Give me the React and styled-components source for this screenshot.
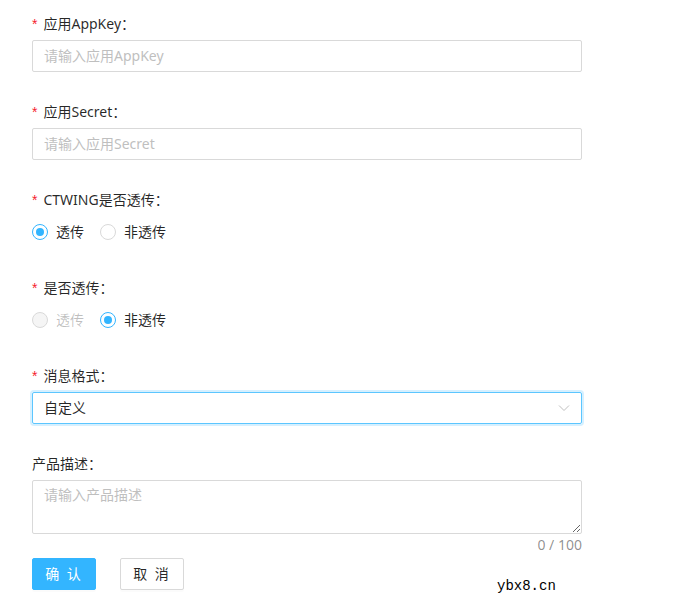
import React from 'react'
import styled, { createGlobalStyle } from 'styled-components'

const primary = '#33b5ff'

const GlobalStyle = createGlobalStyle`
  html, body {
    margin: 0;
    padding: 0;
    background: #fff;
  }
  body {
    font-family: "Noto Sans", "Noto Sans CJK SC", sans-serif;
    font-size: 14px;
    color: rgba(0, 0, 0, 0.85);
  }
`

const Page = styled.div`
  position: relative;
  width: 675px;
  height: 615px;
  overflow: hidden;
  box-sizing: border-box;
  padding: 8px 0 0 32px;
`

const Form = styled.form`
  width: 550px;
  display: flex;
  flex-direction: column;
`

const Item = styled.div`
  display: flex;
  flex-direction: column;
  margin-bottom: ${props => props.$last ? '0' : '24px'};
`

const Label = styled.label`
  height: 32px;
  line-height: 32px;
  font-size: 14px;
  color: rgba(0, 0, 0, 0.85);

  &::before {
    content: ${props => props.$required ? '"*"' : 'none'};
    color: #f5222d;
    margin-right: 6px;
    font-family: "Liberation Sans", sans-serif;
  }
`

const Input = styled.input`
  box-sizing: border-box;
  width: 100%;
  height: 32px;
  padding: 3px 11px 5px;
  border: 1px solid #d9d9d9;
  border-radius: 2px;
  font: inherit;
  font-size: 14px;
  color: rgba(0, 0, 0, 0.85);
  outline: none;

  &::placeholder {
    color: #bfbfbf;
  }
`

const RadioGroup = styled.div`
  display: flex;
  align-items: center;
  height: 32px;
`

const RadioOption = styled.label`
  display: inline-flex;
  align-items: center;
  margin-right: 8px;
  cursor: ${props => props.$disabled ? 'not-allowed' : 'pointer'};
  color: ${props => props.$disabled ? 'rgba(0, 0, 0, 0.25)' : 'rgba(0, 0, 0, 0.85)'};
`

const RadioCircle = styled.span`
  position: relative;
  box-sizing: border-box;
  width: 16px;
  height: 16px;
  border-radius: 50%;
  border: 1px solid ${props => props.$checked ? primary : '#d9d9d9'};
  background: ${props => props.$disabled ? '#f5f5f5' : '#fff'};

  &::after {
    content: '';
    position: absolute;
    left: 3px;
    top: 3px;
    width: 8px;
    height: 8px;
    border-radius: 50%;
    background: ${primary};
    display: ${props => props.$checked ? 'block' : 'none'};
  }
`

const RadioText = styled.span`
  padding: 0 8px;
  margin-top: -2px;
`

const Select = styled.div`
  box-sizing: border-box;
  height: 32px;
  display: flex;
  align-items: center;
  justify-content: space-between;
  padding: 0 11px 2px;
  border: 1px solid #5cc6ff;
  border-radius: 2px;
  box-shadow: 0 0 0 2px rgba(51, 181, 255, 0.2);
  color: rgba(0, 0, 0, 0.85);
`

const Arrow = styled.svg`
  width: 12px;
  height: 12px;
  margin-top: 2px;
  color: #bfbfbf;
`

const TextArea = styled.textarea`
  box-sizing: border-box;
  display: block;
  width: 100%;
  height: 54px;
  padding: 3px 11px 4px;
  border: 1px solid #d9d9d9;
  border-radius: 2px;
  font: inherit;
  font-size: 14px;
  outline: none;
  resize: vertical;

  &::placeholder {
    color: #bfbfbf;
  }
`

const Count = styled.div`
  text-align: right;
  height: 24px;
  line-height: 22px;
  color: rgba(0, 0, 0, 0.45);
  font-size: 14px;
`

const Buttons = styled.div`
  display: flex;
  gap: 24px;
`

const Button = styled.button`
  box-sizing: border-box;
  width: 64px;
  height: 32px;
  padding: 0 0 2px;
  border-radius: 2px;
  font: inherit;
  font-size: 14px;
  letter-spacing: 2px;
  cursor: pointer;
  border: 1px solid ${props => props.$primary ? primary : '#d9d9d9'};
  background: ${props => props.$primary ? primary : '#fff'};
  color: ${props => props.$primary ? '#fff' : 'rgba(0, 0, 0, 0.85)'};
  box-shadow: 0 2px 0 rgba(0, 0, 0, 0.015);
`

const Watermark = styled.div`
  position: absolute;
  left: 497px;
  top: 578px;
  font-family: "Liberation Mono", monospace;
  font-size: 14px;
  color: #000;
`

const Radio = ({ label, checked, disabled }) => (
  <RadioOption $disabled={disabled}>
    <RadioCircle $checked={checked} $disabled={disabled} />
    <RadioText>{label}</RadioText>
  </RadioOption>
)

const App = () => {
  return (
    <Page>
      <GlobalStyle />
      <Form onSubmit={e => e.preventDefault()}>
        <Item>
          <Label $required>应用AppKey：</Label>
          <Input placeholder="请输入应用AppKey" />
        </Item>
        <Item>
          <Label $required>应用Secret：</Label>
          <Input placeholder="请输入应用Secret" />
        </Item>
        <Item>
          <Label $required>CTWING是否透传：</Label>
          <RadioGroup>
            <Radio label="透传" checked />
            <Radio label="非透传" />
          </RadioGroup>
        </Item>
        <Item>
          <Label $required>是否透传：</Label>
          <RadioGroup>
            <Radio label="透传" disabled />
            <Radio label="非透传" checked />
          </RadioGroup>
        </Item>
        <Item>
          <Label $required>消息格式：</Label>
          <Select>
            <span>自定义</span>
            <Arrow viewBox="0 0 12 12" fill="none" stroke="currentColor" strokeWidth="1">
              <path d="M1 3.5 L6 8.5 L11 3.5" />
            </Arrow>
          </Select>
        </Item>
        <Item $last>
          <Label>产品描述：</Label>
          <TextArea placeholder="请输入产品描述" />
          <Count>0 / 100</Count>
        </Item>
        <Buttons>
          <Button $primary type="submit">确 认</Button>
          <Button type="button">取 消</Button>
        </Buttons>
      </Form>
      <Watermark>ybx8.cn</Watermark>
    </Page>
  )
}

export default App
